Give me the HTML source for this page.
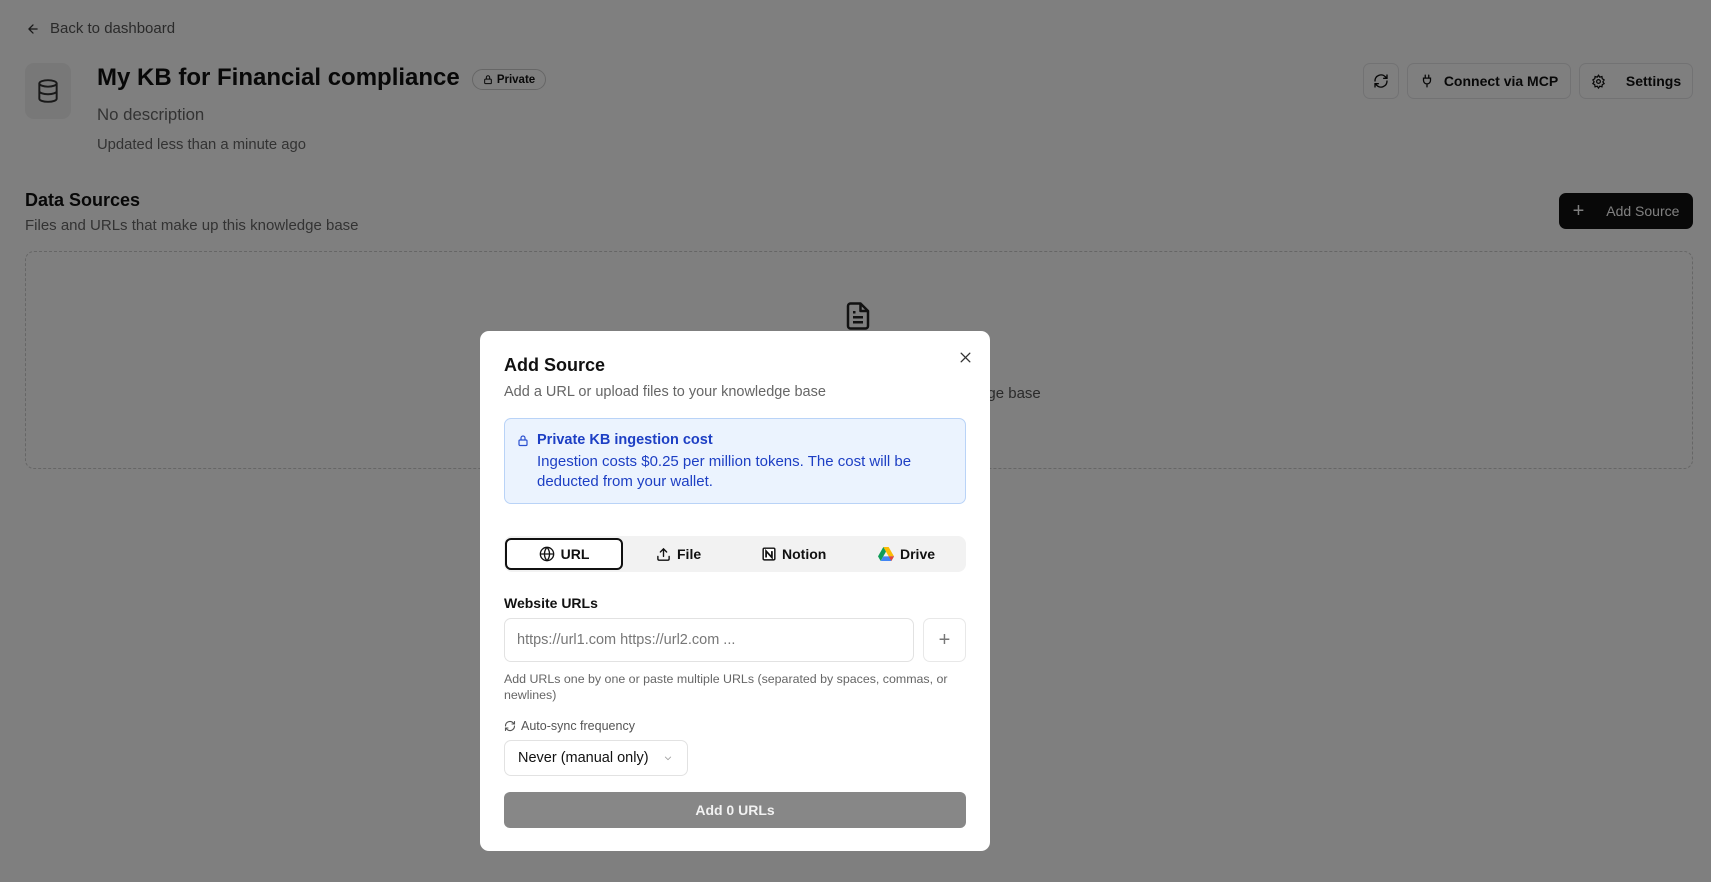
<!DOCTYPE html>
<html><head><meta charset="utf-8"><style>
*{box-sizing:border-box;margin:0;padding:0}
body{width:1711px;height:882px;overflow:hidden;background:#fff;font-family:"Liberation Sans",sans-serif;color:#111;position:relative}
.abs{position:absolute}
.btn{position:absolute;border:1px solid #e4e4e7;border-radius:7px;background:#fff;display:flex;align-items:center;justify-content:center;font-size:14px;font-weight:bold;color:#111;gap:10px}
.overlay{position:absolute;inset:0;background:rgba(0,0,0,0.5)}
.modal{position:absolute;left:480px;top:331px;width:510px;height:520px;background:#fff;border-radius:9px}
svg{display:block}
</style></head><body>
<div class="abs" style="left:26px;top:20px;display:flex;align-items:center;gap:10px;font-size:15px;color:#555">
<svg width="14" height="14" viewBox="0 0 24 24" fill="none" stroke="#333" stroke-width="2.2" stroke-linecap="round" stroke-linejoin="round"><path d="M19 12H5M12 19l-7-7 7-7"/></svg>Back to dashboard</div>
<div class="abs" style="left:25px;top:63px;width:46px;height:56px;background:#f0f0f0;border-radius:9px;display:flex;align-items:center;justify-content:center">
<svg width="26" height="28" viewBox="0 0 24 24" fill="none" stroke="#333" stroke-width="1.8"><ellipse cx="12" cy="5" rx="8" ry="3"/><path d="M4 5v14c0 1.7 3.6 3 8 3s8-1.3 8-3V5M4 12c0 1.7 3.6 3 8 3s8-1.3 8-3"/></svg></div>
<div class="abs" style="left:97px;top:64px;font-size:24px;font-weight:bold">My KB for Financial compliance</div>
<div class="abs" style="left:472px;top:69px;height:21px;width:74px;border:1px solid #ccc;border-radius:11px;font-size:11.5px;font-weight:bold;display:flex;align-items:center;justify-content:center;gap:4px">
<svg width="10" height="11" viewBox="0 0 24 24" fill="none" stroke="#111" stroke-width="2.4"><rect x="4" y="11" width="16" height="11" rx="2"/><path d="M8 11V7a4 4 0 018 0v4"/></svg>Private</div>
<div class="abs" style="left:97px;top:105px;font-size:16.8px;color:#666">No description</div>
<div class="abs" style="left:97px;top:137px;font-size:14.8px;color:#666">Updated less than a minute ago</div>
<div class="btn" style="left:1363px;top:63px;width:36px;height:36px"><svg width="16" height="16" viewBox="0 0 24 24" fill="none" stroke="#111" stroke-width="2" stroke-linecap="round"><path d="M21 12a9 9 0 01-15.5 6.3L3 16M3 12a9 9 0 0115.5-6.3L21 8M21 3v5h-5M3 21v-5h5"/></svg></div>
<div class="btn" style="left:1407px;top:63px;width:164px;height:36px"><svg width="14" height="16" viewBox="0 0 24 24" fill="none" stroke="#111" stroke-width="2.2" stroke-linecap="round"><path d="M9 2v5M15 2v5M6 7h12v4a6 6 0 01-12 0zM12 17v5"/></svg>Connect via MCP</div>
<div class="btn" style="left:1579px;top:63px;width:114px;height:36px;gap:20px"><svg width="15" height="15" viewBox="0 0 24 24" fill="none" stroke="#111" stroke-width="2"><circle cx="12" cy="12" r="3"/><path d="M12 2l2 3 3.5-1 .5 3.5 3 2-2 3 2 3-3 1.5-.5 3.5-3.5-1-2 3-2-3-3.5 1-.5-3.5-3-1.5 2-3-2-3 3-2L6.5 4 10 5z"/></svg>Settings</div>
<div class="abs" style="left:25px;top:190px;font-size:18px;font-weight:bold">Data Sources</div>
<div class="abs" style="left:25px;top:217px;font-size:15px;color:#666">Files and URLs that make up this knowledge base</div>
<div class="btn" style="left:1559px;top:193px;width:134px;height:36px;background:#111;border-color:#111;color:#fff;gap:22px;font-weight:normal"><span style="font-size:20px;line-height:1">+</span>Add Source</div>
<div class="abs" style="left:25px;top:251px;width:1668px;height:218px;border:1px dashed #ccc;border-radius:9px"></div>
<div class="abs" style="left:843px;top:300px"><svg width="30" height="32" viewBox="0 0 24 24" fill="none" stroke="#222" stroke-width="2" stroke-linejoin="round"><path d="M14 2H6a2 2 0 00-2 2v16a2 2 0 002 2h12a2 2 0 002-2V8z"/><path d="M14 2v6h6M8 13h8M8 17h8M8 9h2"/></svg></div>
<div class="abs" style="left:0;width:1711px;top:385px;text-align:center;font-size:15px;color:#555;padding-left:2px">Add files or URLs to start building your knowledge base</div>
<div class="overlay"></div>
<div class="modal">
<svg class="abs" style="left:479px;top:20px" width="13" height="13" viewBox="0 0 24 24" stroke="#333" stroke-width="2.5" stroke-linecap="round"><path d="M4 4l16 16M20 4L4 20"/></svg>
<div class="abs" style="left:24px;top:24px;font-size:18px;font-weight:bold">Add Source</div>
<div class="abs" style="left:24px;top:53px;font-size:14.5px;color:#666">Add a URL or upload files to your knowledge base</div>
<div class="abs" style="left:24px;top:87px;width:462px;height:86px;background:#ebf3fe;border:1px solid #b9d3f7;border-radius:7px;color:#1d3fc4;font-size:14.5px">
<svg class="abs" style="left:12px;top:15px" width="12" height="13" viewBox="0 0 24 24" fill="none" stroke="#2a50d0" stroke-width="2.4"><rect x="4" y="11" width="16" height="11" rx="2"/><path d="M8 11V7a4 4 0 018 0v4"/></svg>
<div class="abs" style="left:32px;top:13px;font-weight:bold">Private KB ingestion cost</div>
<div class="abs" style="left:32px;top:33px;line-height:20px;width:420px;font-size:15px">Ingestion costs $0.25 per million tokens. The cost will be deducted from your wallet.</div></div>
<div class="abs" style="left:24px;top:205px;width:462px;height:36px;background:#f2f2f2;border-radius:8px;font-size:14px;font-weight:bold">
<div class="abs" style="left:1px;top:2px;width:118px;height:32px;background:#fff;border:2px solid #111;border-radius:6px;display:flex;align-items:center;justify-content:center;gap:6px"><svg width="16" height="16" viewBox="0 0 24 24" fill="none" stroke="#111" stroke-width="2"><circle cx="12" cy="12" r="10"/><path d="M2 12h20M12 2a15 15 0 010 20M12 2a15 15 0 000 20"/></svg>URL</div>
<div class="abs" style="left:152px;top:0;height:36px;display:flex;align-items:center;gap:6px"><svg width="15" height="15" viewBox="0 0 24 24" fill="none" stroke="#111" stroke-width="2.2" stroke-linecap="round"><path d="M21 15v4a2 2 0 01-2 2H5a2 2 0 01-2-2v-4M17 8l-5-5-5 5M12 3v12"/></svg>File</div>
<div class="abs" style="left:258px;top:0;height:36px;display:flex;align-items:center;gap:6px"><svg width="14" height="14" viewBox="0 0 24 24"><rect x="2" y="2" width="20" height="20" rx="2" fill="#fff" stroke="#111" stroke-width="2.5"/><path d="M7 18V7l10 11V7" fill="none" stroke="#111" stroke-width="3"/></svg>Notion</div>
<div class="abs" style="left:374px;top:0;height:36px;display:flex;align-items:center;gap:6px"><svg width="16" height="14" viewBox="0 0 24 21"><path d="M8 0h8l8 14h-8z" fill="#fbbc04"/><path d="M8 0L0 14l4 7 8-14z" fill="#0f9d58"/><path d="M4 21h16l4-7H8z" fill="#4285f4"/><path d="M16 14h8l-4 7z" fill="#ea4335"/></svg>Drive</div></div>
<div class="abs" style="left:24px;top:264px;font-size:14px;font-weight:bold">Website URLs</div>
<div class="abs" style="left:24px;top:287px;width:410px;height:44px;border:1px solid #e2e2e2;border-radius:7px;font-size:14.5px;color:#777;padding:13px 12px">https://url1.com https://url2.com ...</div>
<div class="abs" style="left:443px;top:287px;width:43px;height:44px;border:1px solid #e8e8e8;border-radius:7px;display:flex;align-items:center;justify-content:center;font-size:20px;color:#777">+</div>
<div class="abs" style="left:24px;top:340px;width:470px;font-size:12.4px;color:#666;line-height:16px">Add URLs one by one or paste multiple URLs (separated by spaces, commas, or newlines)</div>
<div class="abs" style="left:24px;top:388px;font-size:12.5px;color:#555;display:flex;align-items:center;gap:5px"><svg width="12" height="12" viewBox="0 0 24 24" fill="none" stroke="#555" stroke-width="2.2" stroke-linecap="round"><path d="M21 12a9 9 0 01-15.5 6.3L3 16M3 12a9 9 0 0115.5-6.3L21 8M21 3v5h-5M3 21v-5h5"/></svg>Auto-sync frequency</div>
<div class="abs" style="left:24px;top:409px;width:184px;height:36px;border:1px solid #e2e2e2;border-radius:7px;font-size:14.5px;display:flex;align-items:center;padding-left:13px;gap:14px">Never (manual only)<svg width="10" height="10" viewBox="0 0 24 24" fill="none" stroke="#999" stroke-width="2"><path d="M5 9l7 7 7-7"/></svg></div>
<div class="abs" style="left:24px;top:461px;width:462px;height:36px;background:#878787;border-radius:6px;color:#f2f2f2;font-size:14px;font-weight:bold;display:flex;align-items:center;justify-content:center">Add 0 URLs</div>
</div>
</body></html>
